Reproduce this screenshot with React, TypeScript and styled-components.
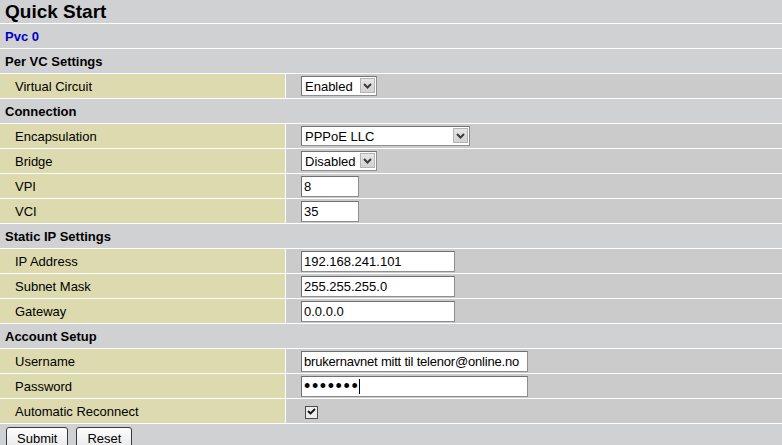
import styled, { createGlobalStyle } from "styled-components";

const GlobalStyle = createGlobalStyle`
  html, body {
    margin: 0;
    padding: 0;
    background: #d0d1d3;
    font-family: "Liberation Sans", Arial, sans-serif;
    color: #000;
  }
`;

const FormGrid = styled.div`
  display: grid;
  grid-template-columns: 285px 1fr;
  gap: 1px;
  background: #ffffff;
  border-bottom: 1px solid #ffffff;
`;

const TitleCell = styled.div`
  grid-column: 1 / -1;
  height: 23px;
  display: flex;
  align-items: center;
  padding-left: 5px;
  background: #d0d1d3;
  font-size: 19px;
  font-weight: bold;
`;

interface ISection {
  blue?: boolean;
}
const SectionCell = styled.div<ISection>`
  grid-column: 1 / -1;
  height: 24px;
  display: flex;
  align-items: center;
  padding-left: 5px;
  background: #d0d1d3;
  font-size: 13px;
  font-weight: bold;
  color: ${(props) => (props.blue ? "#0000cc" : "#000")};
`;

const LabelCell = styled.div`
  height: 24px;
  display: flex;
  align-items: center;
  padding-left: 15px;
  background: #dcdaae;
  font-size: 13px;
`;

const ValueCell = styled.div`
  height: 24px;
  display: flex;
  align-items: center;
  padding-left: 15px;
  background: #cbcbcb;
`;

interface IField {
  w: number;
  tight?: boolean;
}
const TextField = styled.input<IField>`
  box-sizing: border-box;
  width: ${(props) => props.w}px;
  height: 21px;
  margin: 0;
  padding: 0 1px 0 2px;
  border: 1px solid #8e8e8e;
  border-top-color: #707070;
  border-left-color: #707070;
  background: #fff;
  font-family: "Liberation Sans", Arial, sans-serif;
  font-size: 13px;
  letter-spacing: ${(props) => (props.tight ? "-0.2px" : "normal")};
  color: #000;
  outline: none;
`;

const PasswordWrap = styled.span`
  position: relative;
  display: inline-block;
  height: 21px;
`;

const PasswordField = styled(TextField)`
  font-size: 18px;
  line-height: 19px;
  letter-spacing: 1.6px;
  padding-left: 2px;
`;

const Caret = styled.span`
  position: absolute;
  left: 58px;
  top: 3px;
  width: 1px;
  height: 15px;
  background: #000;
  pointer-events: none;
`;

const SelectWrap = styled.span`
  position: relative;
  display: inline-block;
  height: 20px;
`;

interface IWidth {
  w: number;
}
const Select = styled.select<IWidth>`
  appearance: none;
  box-sizing: border-box;
  width: ${(props) => props.w}px;
  height: 20px;
  margin: 0;
  padding: 0 0 0 3px;
  border: 1px solid #8e8e8e;
  border-top-color: #747474;
  border-left-color: #747474;
  background: #fff;
  border-radius: 0;
  font-family: "Liberation Sans", Arial, sans-serif;
  font-size: 13px;
  color: #000;
  outline: none;
`;

const ArrowBox = styled.span`
  position: absolute;
  top: 2px;
  right: 2px;
  width: 15px;
  height: 15px;
  box-sizing: border-box;
  border: 1px solid #b4b4b4;
  background: linear-gradient(#e6e6e6, #d2d2d2);
  display: flex;
  align-items: center;
  justify-content: center;
  pointer-events: none;
`;

const Check = styled.input`
  appearance: none;
  box-sizing: border-box;
  width: 13px;
  height: 13px;
  margin: 0 0 0 4px;
  border: 1px solid #4a4a4a;
  background: #ececec;
`;

const CheckWrap = styled.span`
  position: relative;
  display: inline-block;
  height: 13px;
`;

const CheckMark = styled.svg`
  position: absolute;
  left: 6px;
  top: 2px;
  pointer-events: none;
`;

const ButtonRow = styled.div`
  display: flex;
  gap: 8px;
  padding: 3px 0 0 6px;
`;

const Button = styled.button`
  height: 22px;
  padding: 0 10px;
  border: 1px solid #3a3a3a;
  border-radius: 3px;
  background: linear-gradient(#fdfdfd, #e9e9e9);
  font-family: "Liberation Sans", Arial, sans-serif;
  font-size: 13px;
  color: #000;
`;

function Dropdown({ w, value, options }: { w: number; value: string; options: string[] }) {
  return (
    <SelectWrap>
      <Select w={w} defaultValue={value}>
        {options.map((o) => (
          <option key={o}>{o}</option>
        ))}
      </Select>
      <ArrowBox>
        <svg width="9" height="6" viewBox="0 0 9 6">
          <path d="M1 1 L4.5 4.5 L8 1" fill="none" stroke="#3c3c3c" strokeWidth="2" />
        </svg>
      </ArrowBox>
    </SelectWrap>
  );
}

export default function App() {
  return (
    <>
      <GlobalStyle />
      <FormGrid>
        <TitleCell>Quick Start</TitleCell>
        <SectionCell blue>Pvc 0</SectionCell>
        <SectionCell>Per VC Settings</SectionCell>
        <LabelCell>Virtual Circuit</LabelCell>
        <ValueCell>
          <Dropdown w={76} value="Enabled" options={["Enabled", "Disabled"]} />
        </ValueCell>

        <SectionCell>Connection</SectionCell>
        <LabelCell>Encapsulation</LabelCell>
        <ValueCell>
          <Dropdown
            w={169}
            value="PPPoE LLC"
            options={["PPPoE LLC", "PPPoE VC-Mux", "PPPoA LLC", "PPPoA VC-Mux"]}
          />
        </ValueCell>
        <LabelCell>Bridge</LabelCell>
        <ValueCell>
          <Dropdown w={76} value="Disabled" options={["Enabled", "Disabled"]} />
        </ValueCell>
        <LabelCell>VPI</LabelCell>
        <ValueCell>
          <TextField w={58} defaultValue="8" />
        </ValueCell>
        <LabelCell>VCI</LabelCell>
        <ValueCell>
          <TextField w={58} defaultValue="35" />
        </ValueCell>

        <SectionCell>Static IP Settings</SectionCell>
        <LabelCell>IP Address</LabelCell>
        <ValueCell>
          <TextField w={154} defaultValue="192.168.241.101" />
        </ValueCell>
        <LabelCell>Subnet Mask</LabelCell>
        <ValueCell>
          <TextField w={154} defaultValue="255.255.255.0" />
        </ValueCell>
        <LabelCell>Gateway</LabelCell>
        <ValueCell>
          <TextField w={154} defaultValue="0.0.0.0" />
        </ValueCell>

        <SectionCell>Account Setup</SectionCell>
        <LabelCell>Username</LabelCell>
        <ValueCell>
          <TextField w={227} tight defaultValue="brukernavnet mitt til telenor@online.no" />
        </ValueCell>
        <LabelCell>Password</LabelCell>
        <ValueCell>
          <PasswordWrap>
            <PasswordField w={227} type="password" defaultValue="passord" />
            <Caret />
          </PasswordWrap>
        </ValueCell>
        <LabelCell>Automatic Reconnect</LabelCell>
        <ValueCell>
          <CheckWrap>
            <Check type="checkbox" defaultChecked />
            <CheckMark width="9" height="9" viewBox="0 0 9 9">
              <path d="M1 4 L3.5 6.5 L8 2" fill="none" stroke="#111" strokeWidth="1.8" />
            </CheckMark>
          </CheckWrap>
        </ValueCell>
      </FormGrid>
      <ButtonRow>
        <Button type="submit">Submit</Button>
        <Button type="reset">Reset</Button>
      </ButtonRow>
    </>
  );
}
